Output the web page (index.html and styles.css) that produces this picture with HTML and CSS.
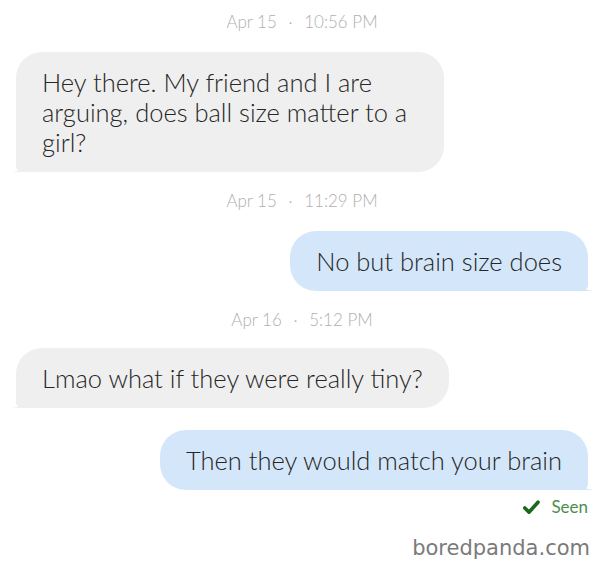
FILE: index.html
```html
<!DOCTYPE html>
<html lang="en">
<head>
  <meta charset="UTF-8">
  <meta name="viewport" content="width=device-width, initial-scale=1.0">
  <title>Messages</title>
  <link rel="stylesheet" href="styles.css">
</head>
<body>
  <main class="thread">
    <p class="stamp">Apr 15 <span class="dot">&middot;</span> 10:56 PM</p>
    <div class="msg msg-in">
      <p class="bubble bubble-wide">Hey there. My friend and I are arguing, does ball size matter to a girl?</p>
    </div>

    <p class="stamp">Apr 15 <span class="dot">&middot;</span> 11:29 PM</p>
    <div class="msg msg-out">
      <p class="bubble">No but brain size does</p>
    </div>

    <p class="stamp">Apr 16 <span class="dot">&middot;</span> 5:12 PM</p>
    <div class="msg msg-in msg-close">
      <p class="bubble">Lmao what if they were really tiny?</p>
    </div>
    <div class="msg msg-out msg-next">
      <p class="bubble">Then they would match your brain</p>
    </div>

    <!-- read receipt -->
    <div class="seen">
      <svg class="check" width="17" height="15" viewBox="0 0 17 15">
        <path d="M1.8 8 L6 12.2 L15 2.2" fill="none" stroke="#1b6a1b" stroke-width="3.6" stroke-linecap="round" stroke-linejoin="round"/>
      </svg>
      <span>Seen</span>
    </div>

    <div class="watermark">boredpanda.com</div>
  </main>
</body>
</html>
```

FILE: styles.css
```css
body {
  margin: 0;
  background: #ffffff;
  font-family: Lato, "Open Sans", sans-serif;
  color: #262626;
}

.thread {
  display: flex;
  flex-direction: column;
  padding: 12px 17px 0 16px;
}

/* date separators */
.stamp {
  margin: 19px 0 0;
  text-align: center;
  font-size: 17px;
  font-weight: 300;
  line-height: 20px;
  color: #b0b0b0;
}

.thread > .stamp:first-child {
  margin-top: 0;
}

.dot {
  margin: 0 7px;
}

.msg {
  display: flex;
  margin-top: 20px;
}

.msg-in {
  justify-content: flex-start;
}

.msg-out {
  justify-content: flex-end;
}

.msg-close {
  margin-top: 18px;
}

.msg-next {
  margin-top: 22px;
}

/* speech bubbles */
.bubble {
  position: relative;
  margin: 0;
  padding: 15px 26px;
  font-size: 25.5px;
  font-weight: 300;
  line-height: 30px;
  border-radius: 26px;
}

.bubble-wide {
  width: 376px;
}

.msg-in .bubble {
  background: #efefef;
  border-bottom-left-radius: 6px;
}

.msg-out .bubble {
  background: #d4e7fa;
  border-bottom-right-radius: 6px;
}

.msg-in .bubble::before,
.msg-out .bubble::before {
  content: "";
  position: absolute;
  bottom: 0;
  width: 14px;
  height: 14px;
}

.msg-in .bubble::before {
  left: -3px;
  background: radial-gradient(circle at 0 0, transparent 13px, #efefef 14px);
}

.msg-out .bubble::before {
  right: -4px;
  background: radial-gradient(circle at 100% 0, transparent 13px, #d4e7fa 14px);
}

/* read receipt */
.seen {
  display: flex;
  justify-content: flex-end;
  align-items: center;
  gap: 11px;
  margin-top: 7px;
  font-size: 17px;
  line-height: 20px;
  color: #4b8e4b;
}

.watermark {
  margin-top: 18px;
  text-align: right;
  font-family: "DejaVu Sans", sans-serif;
  font-size: 21px;
  line-height: 26px;
  color: #7a7a7a;
  margin-right: -2px;
}
```
